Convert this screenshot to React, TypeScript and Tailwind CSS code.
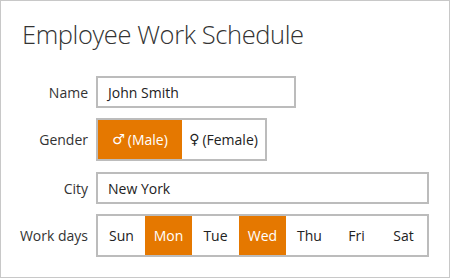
const days = ['Sun', 'Mon', 'Tue', 'Wed', 'Thu', 'Fri', 'Sat'];
const workDays = ['Mon', 'Wed'];

function Label({ children }: { children: string }) {
  return <div className="w-[87px] shrink-0 text-right text-[14px] text-[#333]">{children}</div>;
}

export default function App() {
  return (
    <div className="h-[278px] w-[450px] border border-[#c8c8c8] bg-white pt-[17px] font-['Open_Sans',sans-serif] text-[#222]">
      <h1 className="h-[32px] pl-[21px] text-[25.5px] font-light leading-[32px] tracking-[-0.4px] text-[#333]">
        Employee Work Schedule
      </h1>

      <div className="mt-[26px] flex flex-col">
        <div className="flex items-center gap-2">
          <Label>Name</Label>
          <div className="flex h-[32px] w-[200px] items-center border-2 border-[#bcbcbc] px-[10px] text-[14px]">
            John Smith
          </div>
        </div>

        <div className="mt-[10px] flex items-center gap-2">
          <Label>Gender</Label>
          <div className="flex h-[43px] border-2 border-[#bcbcbc] text-[14px]">
            <div className="flex w-[84px] items-center justify-center gap-[3px] bg-[#e57800] text-white">
              <span className="font-['DejaVu_Sans',sans-serif] text-[14px] font-bold">♂</span>
              <span>(Male)</span>
            </div>
            <div className="flex w-[83px] items-center justify-center gap-[3px]">
              <span className="font-['DejaVu_Sans',sans-serif] text-[14px] font-bold">♀</span>
              <span>(Female)</span>
            </div>
          </div>
        </div>

        <div className="mt-[11px] flex items-center gap-2">
          <Label>City</Label>
          <div className="flex h-[32px] w-[333px] items-center border-2 border-[#bcbcbc] px-[10px] text-[14px]">
            New York
          </div>
        </div>

        <div className="mt-[10px] flex items-center gap-2">
          <Label>Work days</Label>
          <div className="flex h-[43px] border-2 border-[#bcbcbc] text-[14px]">
            {days.map((d) => (
              <div
                key={d}
                className={
                  workDays.includes(d)
                    ? 'flex w-[47px] items-center justify-center bg-[#e57800] text-white'
                    : 'flex w-[47px] items-center justify-center'
                }
              >
                {d}
              </div>
            ))}
          </div>
        </div>
      </div>
    </div>
  );
}
